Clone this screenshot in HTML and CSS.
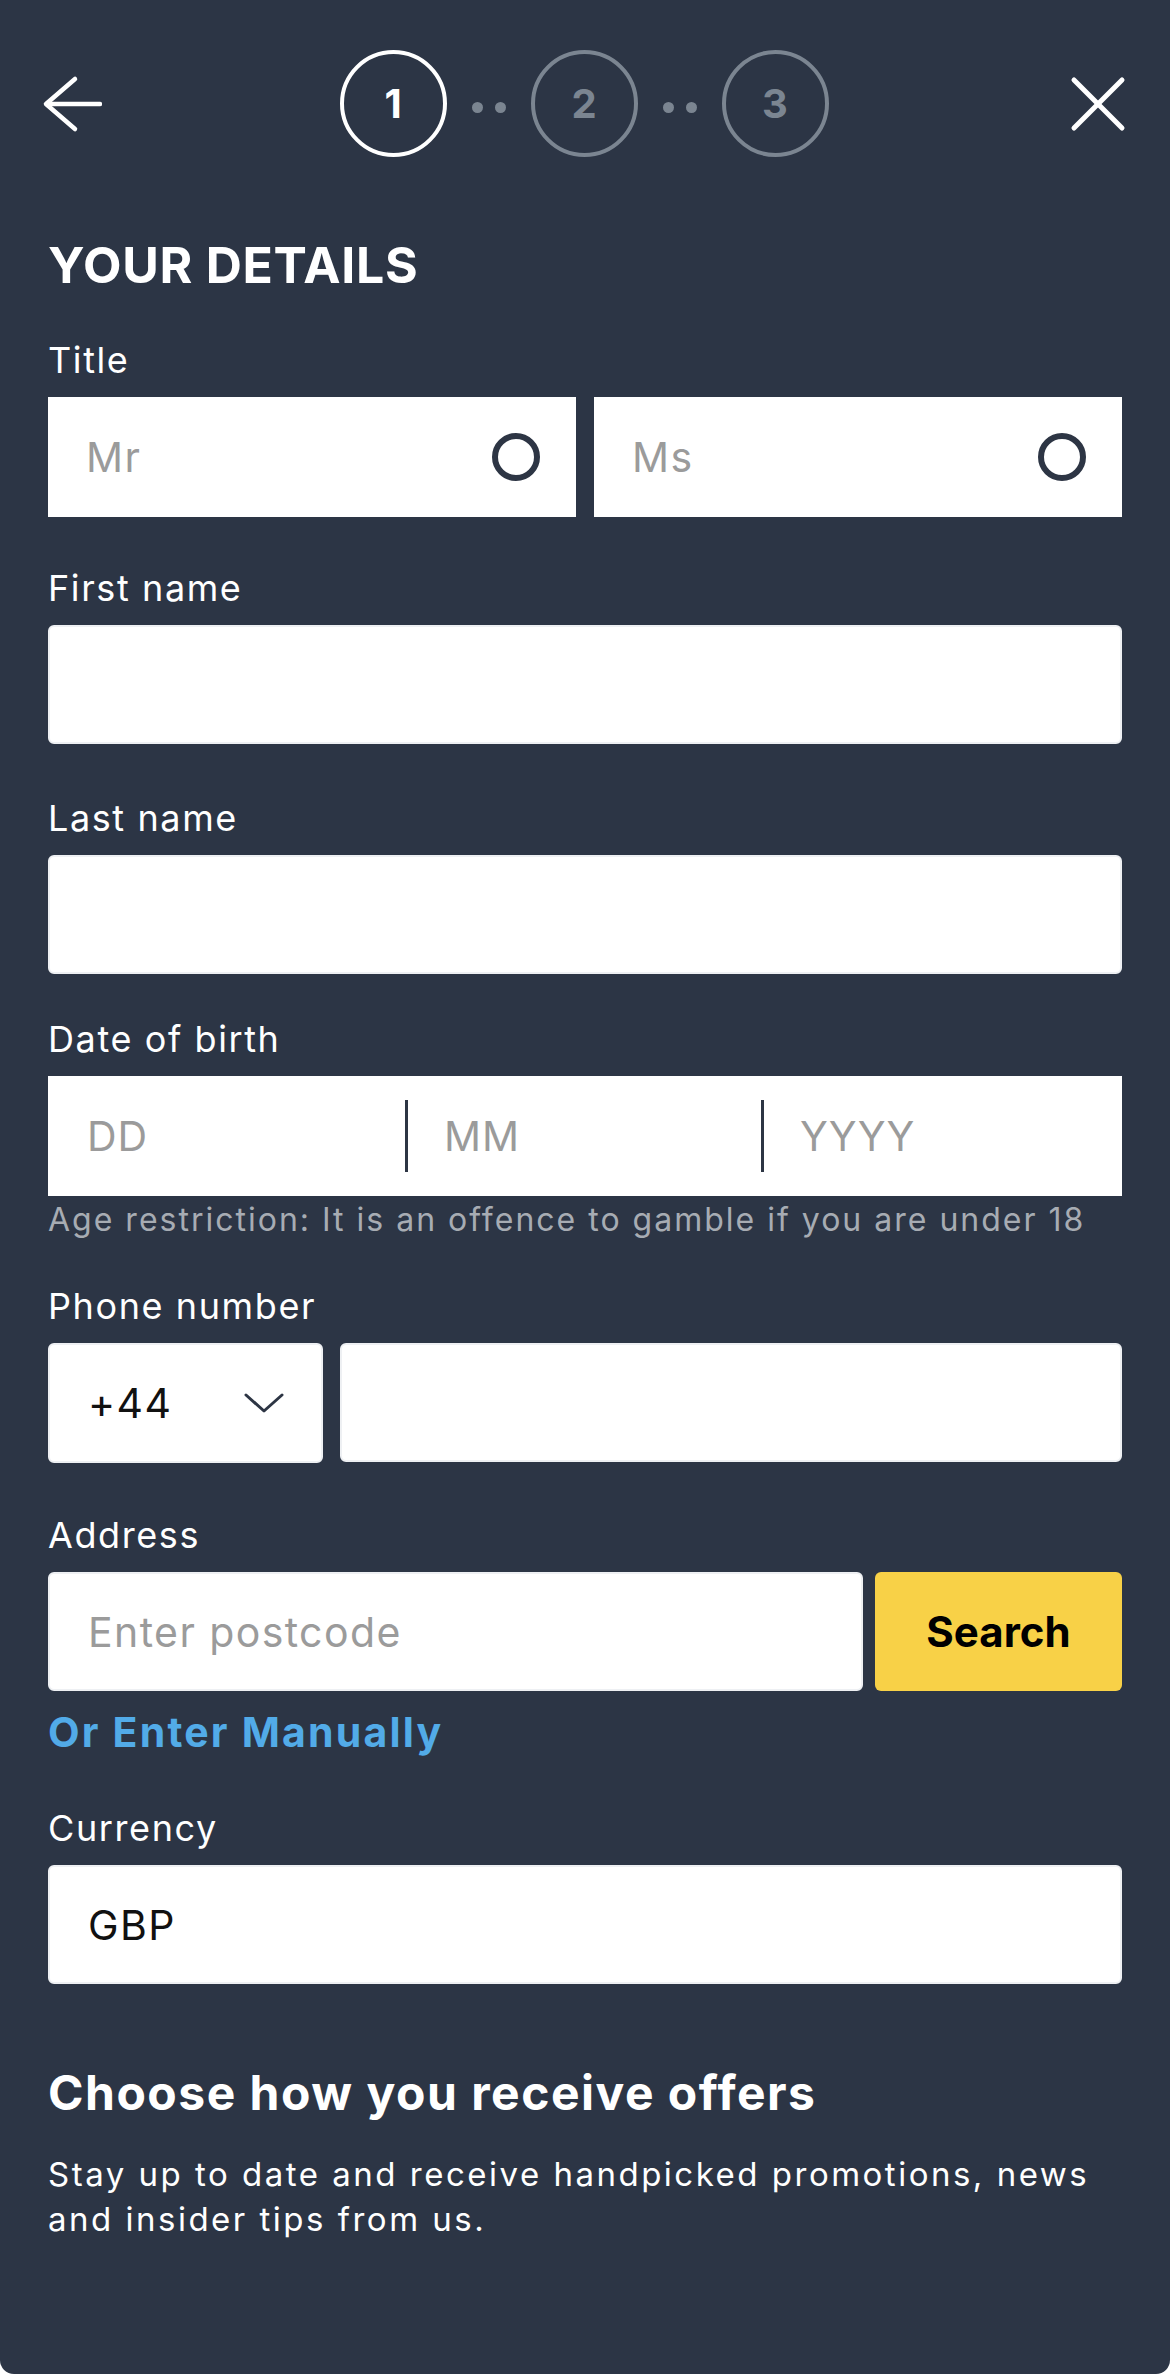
FILE: index.html
```html
<!DOCTYPE html>
<html lang="en">
<head>
<meta charset="utf-8">
<title>Your details</title>
<link rel="stylesheet" href="styles.css">
</head>
<body>
<div class="panel">
  <header class="topbar">
    <button class="icon-btn back" aria-label="Back">
      <svg width="60" height="60" viewBox="0 0 60 60" fill="none" stroke="#fff" stroke-width="4.5" stroke-linecap="round" stroke-linejoin="round">
        <path d="M5 30 H58"/>
        <path d="M33 5 L4 30 L33 55"/>
      </svg>
    </button>
    <ol class="steps">
      <li class="step step--active">1</li>
      <li class="dots"><span></span><span></span></li>
      <li class="step">2</li>
      <li class="dots"><span></span><span></span></li>
      <li class="step">3</li>
    </ol>
    <button class="icon-btn close" aria-label="Close">
      <svg width="56" height="56" viewBox="0 0 56 56" fill="none" stroke="#fff" stroke-width="5" stroke-linecap="round">
        <path d="M4 4 L52 52"/>
        <path d="M52 4 L4 52"/>
      </svg>
    </button>
  </header>

  <main class="form">
    <h1 class="heading">YOUR DETAILS</h1>

    <div class="field field--title">
      <div class="label">Title</div>
      <div class="radio-row">
        <div class="radio"><span class="placeholder">Mr</span><span class="radio-mark"></span></div>
        <div class="radio"><span class="placeholder">Ms</span><span class="radio-mark"></span></div>
      </div>
    </div>

    <div class="field field--first">
      <div class="label">First name</div>
      <div class="input"></div>
    </div>

    <div class="field field--last">
      <div class="label">Last name</div>
      <div class="input"></div>
    </div>

    <div class="field field--dob">
      <div class="label">Date of birth</div>
      <div class="dob">
        <div class="dob-part"><span class="placeholder">DD</span></div>
        <div class="dob-part dob-part--split"><span class="placeholder">MM</span></div>
        <div class="dob-part dob-part--split"><span class="placeholder">YYYY</span></div>
      </div>
      <p class="hint">Age restriction: It is an offence to gamble if you are under 18</p>
    </div>

    <div class="field field--phone">
      <div class="label">Phone number</div>
      <div class="phone-row">
        <div class="input code">
          <span class="value">+44</span>
          <svg class="chevron" width="40" height="20" viewBox="0 0 40 20" fill="none" stroke="#2d3544" stroke-width="3" stroke-linecap="round" stroke-linejoin="round">
            <path d="M2 2 L20 18 L38 2"/>
          </svg>
        </div>
        <div class="input"></div>
      </div>
    </div>

    <div class="field field--address">
      <div class="label">Address</div>
      <div class="address-row">
        <div class="input"><span class="placeholder">Enter postcode</span></div>
        <button class="search-btn">Search</button>
      </div>
      <a class="manual-link">Or Enter Manually</a>
    </div>

    <div class="field field--currency">
      <div class="label">Currency</div>
      <div class="input"><span class="value">GBP</span></div>
    </div>

    <section class="offers">
      <h2 class="offers-title">Choose how you receive offers</h2>
      <p class="offers-text">Stay up to date and receive handpicked promotions, news<br>and insider tips from us.</p>
    </section>
  </main>
</div>
</body>
</html>
```

FILE: styles.css
```css
* {
  box-sizing: border-box;
  margin: 0;
  padding: 0;
}

html,
body {
  background: #ffffff;
}

body {
  font-family: Inter, "Open Sans", "Liberation Sans", sans-serif;
  color: #ffffff;
}

.panel {
  background: #2c3545;
  min-height: 2374px;
  border-radius: 0 0 14px 14px;
  padding-top: 50px;
}

/* ---------- top bar ---------- */
.topbar {
  display: grid;
  grid-template-columns: 1fr auto 1fr;
  align-items: center;
  height: 107px;
  padding: 0 44px 0 42px;
}

.icon-btn {
  background: none;
  border: 0;
  display: flex;
  cursor: pointer;
}

.back {
  justify-self: start;
}

.close {
  justify-self: end;
}

.steps {
  list-style: none;
  display: flex;
  align-items: center;
}

.step {
  width: 107px;
  height: 107px;
  border: 4px solid #7b8591;
  border-radius: 50%;
  display: flex;
  align-items: center;
  justify-content: center;
  font-size: 40px;
  font-weight: 700;
  color: #7b8591;
}

.step--active {
  border-color: #ffffff;
  color: #ffffff;
}

.dots {
  width: 84px;
  display: flex;
  justify-content: center;
  gap: 12px;
  padding-top: 8px;
}

.dots span {
  width: 11px;
  height: 11px;
  border-radius: 50%;
  background: #7b8591;
}

/* ---------- form ---------- */
.form {
  padding: 78px 48px 0;
}

.heading {
  font-size: 50px;
  line-height: 60px;
  font-weight: 700;
  letter-spacing: 0.7px;
  margin-bottom: 45px;
}

.field {
  margin-bottom: 52px;
}

.field--title {
  margin-bottom: 51px;
}

.field--first {
  margin-bottom: 54px;
}

.field--last {
  margin-bottom: 45px;
}

.field--dob {
  margin-bottom: 46px;
}

.field--address {
  margin-bottom: 53px;
}

.field--currency {
  margin-bottom: 81px;
}

.label {
  font-size: 36px;
  line-height: 40px;
  letter-spacing: 1.6px;
  margin-bottom: 17px;
}

.placeholder {
  color: #9b9b9b;
}

.value {
  color: #111111;
}

.input {
  height: 119px;
  background: #ffffff;
  border-radius: 6px;
  border: 2px solid #eef0f3;
  display: flex;
  align-items: center;
  padding: 0 38px;
  font-size: 41px;
  letter-spacing: 1.4px;
}

/* title radios */
.radio-row {
  display: grid;
  grid-template-columns: 1fr 1fr;
  gap: 18px;
}

.radio {
  height: 120px;
  background: #ffffff;
  display: flex;
  align-items: center;
  justify-content: space-between;
  padding: 0 36px 0 38px;
  font-size: 41px;
  letter-spacing: 1.4px;
}

.radio-mark {
  width: 48px;
  height: 48px;
  border: 6px solid #2d3544;
  border-radius: 50%;
}

/* date of birth */
.dob {
  height: 120px;
  background: #ffffff;
  display: grid;
  grid-template-columns: 357px 356px 1fr;
  padding: 24px 0;
  font-size: 41px;
  letter-spacing: 1px;
}

.dob-part {
  display: flex;
  align-items: center;
  padding-left: 39px;
}

.dob-part--split {
  border-left: 3px solid #2d3544;
  padding-left: 36px;
}

.hint {
  margin-top: 4px;
  font-size: 32px;
  line-height: 40px;
  letter-spacing: 2px;
  color: #a7acb3;
}

/* phone */
.phone-row {
  display: grid;
  grid-template-columns: 275px 1fr;
  gap: 17px;
}

.code {
  height: 120px;
  padding-right: 37px;
}

.code .chevron {
  margin-left: auto;
}

/* address */
.address-row {
  display: grid;
  grid-template-columns: 815px 1fr;
  gap: 12px;
}

.search-btn {
  height: 119px;
  background: #f8d147;
  border: 0;
  border-radius: 6px;
  font-family: inherit;
  font-size: 42px;
  font-weight: 700;
  color: #000000;
}

.manual-link {
  display: block;
  margin-top: 18px;
  font-size: 41px;
  line-height: 46px;
  font-weight: 700;
  letter-spacing: 2.2px;
  color: #52abe8;
}

/* offers */
.offers-title {
  font-size: 48px;
  line-height: 56px;
  font-weight: 700;
  letter-spacing: 1.5px;
  margin-bottom: 31px;
}

.offers-text {
  font-size: 33px;
  line-height: 45px;
  letter-spacing: 2.5px;
}
```
